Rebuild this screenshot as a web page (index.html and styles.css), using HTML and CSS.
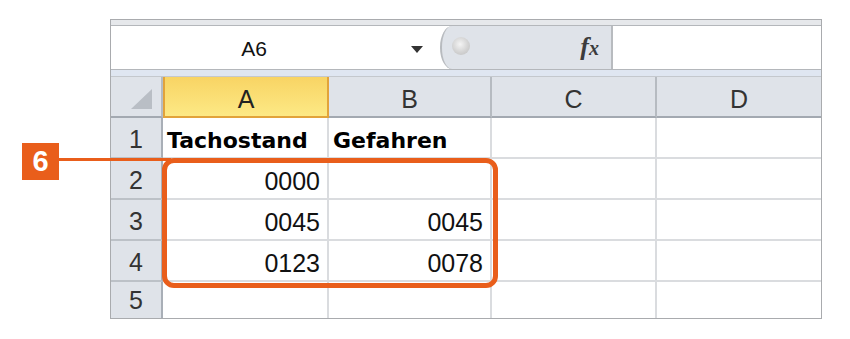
FILE: index.html
```html
<!DOCTYPE html>
<html>
<head>
  <meta charset="UTF-8">
  <link rel="stylesheet" href="styles.css">
</head>
<body>
  <div class="page">

    <!-- Tabellenblatt -->
    <div class="sheet">
      <div class="fbar-strip"></div>
      <div class="fbar">
        <div class="namebox">
          <span class="name">A6</span>
          <span class="drop"></span>
        </div>
        <div class="fx-box">
          <span class="knob"></span>
          <span class="fx">f<span class="fx-x">x</span></span>
        </div>
        <div class="formula"></div>
      </div>
      <div class="fbar-gap"></div>

      <div class="grid">
        <div class="hd corner"><span class="corner-tri"></span></div>
        <div class="hd sel">A</div>
        <div class="hd">B</div>
        <div class="hd">C</div>
        <div class="hd last">D</div>

        <div class="rh">1</div>
        <div class="cell txt">Tachostand</div>
        <div class="cell txt">Gefahren</div>
        <div class="cell"></div>
        <div class="cell last"></div>

        <div class="rh">2</div>
        <div class="cell num">0000</div>
        <div class="cell num"></div>
        <div class="cell"></div>
        <div class="cell last"></div>

        <div class="rh">3</div>
        <div class="cell num">0045</div>
        <div class="cell num">0045</div>
        <div class="cell"></div>
        <div class="cell last"></div>

        <div class="rh">4</div>
        <div class="cell num">0123</div>
        <div class="cell num">0078</div>
        <div class="cell"></div>
        <div class="cell last"></div>

        <div class="rh bottom">5</div>
        <div class="cell bottom"></div>
        <div class="cell bottom"></div>
        <div class="cell bottom"></div>
        <div class="cell bottom last"></div>
      </div>
    </div>

    <!-- Markierung 6 -->
    <div class="badge">6</div>
    <div class="leader"></div>
    <div class="highlight"></div>
  </div>
</body>
</html>
```

FILE: styles.css
```css
body {
  margin: 0;
  background: #fff;
  font-family: "Liberation Sans", Arial, sans-serif;
  color: #222;
}

.page {
  position: relative;
  width: 850px;
  height: 339px;
  padding: 19px 0 0 110px;
  box-sizing: border-box;
}

.sheet {
  width: 712px;
  border: 1px solid #a9abae;
  box-sizing: border-box;
}

/* Bearbeitungsleiste */
.fbar-strip {
  height: 5px;
  background: #e6e8eb;
  border-bottom: 1px solid #b4b7bb;
}

.fbar {
  display: flex;
  height: 43px;
  background: #fff;
}

.namebox {
  width: 329px;
  display: flex;
  align-items: center;
}

.name {
  flex: 1;
  text-align: center;
  font-size: 21px;
  padding-right: 14px;
  padding-top: 2px;
  color: #111;
}

.drop {
  width: 0;
  height: 0;
  border-left: 6px solid transparent;
  border-right: 6px solid transparent;
  border-top: 7px solid #333;
  margin-right: 17px;
  margin-top: 3px;
}

.fx-box {
  position: relative;
  width: 173px;
  background: #dfe3e9;
  border-left: 2px solid #b8bbbf;
  border-right: 2px solid #b8bbbf;
  border-radius: 12px 0 0 12px / 21px 0 0 21px;
  box-sizing: border-box;
  display: flex;
  align-items: center;
  justify-content: flex-end;
}

.knob {
  position: absolute;
  left: 10px;
  top: 11px;
  width: 18px;
  height: 18px;
  border-radius: 50%;
  background: radial-gradient(circle at 45% 40%, #f4f4f4 0%, #d3d3d3 55%, #bdbdbd 100%);
}

.fx {
  font-family: "Liberation Serif", "Times New Roman", serif;
  font-style: italic;
  font-weight: bold;
  font-size: 26px;
  color: #3c3c3c;
  margin-right: 12px;
  margin-top: -2px;
}

.fx-x {
  font-size: 20px;
}

.formula {
  flex: 1;
  background: #fff;
}

.fbar-gap {
  height: 6px;
  background: #dfe6f1;
  border-top: 1px solid #b4b7bb;
  border-bottom: 1px solid #c4c8cd;
}

/* Tabelle */
.grid {
  display: grid;
  grid-template-columns: 52px 166px 163px 165px 1fr;
  grid-template-rows: 41px 41px 41px 41px 41px 36px;
}

.grid > div {
  box-sizing: border-box;
  display: flex;
  align-items: flex-end;
}

.hd {
  background: #dfe3e9;
  border-right: 2px solid #b6bbc1;
  border-bottom: 2px solid #a3a9b1;
  justify-content: center;
  font-size: 25px;
  color: #333;
  padding-bottom: 2px;
}

.hd.sel {
  background: linear-gradient(#f8d464, #fde985);
  border: 2px solid #e2a33a;
  border-top: none;
  color: #222;
}

.corner {
  position: relative;
}

.corner-tri {
  position: absolute;
  right: 9px;
  bottom: 7px;
  width: 0;
  height: 0;
  border-left: 21px solid transparent;
  border-bottom: 20px solid #b9bec5;
}

.rh {
  background: #dfe3e9;
  border-right: 2px solid #a9afb7;
  border-bottom: 2px solid #bcc1c7;
  justify-content: center;
  font-size: 25px;
  color: #333;
  padding-bottom: 3px;
}

.cell {
  border-right: 2px solid #dadcdf;
  border-bottom: 2px solid #dadcdf;
  font-size: 25px;
  color: #111;
  padding-bottom: 2px;
}

.cell.txt {
  font-family: "DejaVu Sans", Verdana, sans-serif;
  font-weight: bold;
  font-size: 22px;
  padding-left: 4px;
  padding-bottom: 4px;
  color: #000;
}

.cell.num {
  justify-content: flex-end;
  padding-right: 7px;
}

.grid .last {
  border-right: none;
}

.grid .bottom {
  border-bottom: none;
}

/* Markierung */
.badge {
  position: absolute;
  left: 22px;
  top: 143px;
  width: 37px;
  height: 37px;
  background: #e95e1b;
  color: #fff;
  font-weight: bold;
  font-size: 29px;
  display: flex;
  align-items: center;
  justify-content: center;
}

.leader {
  position: absolute;
  left: 59px;
  top: 158px;
  width: 112px;
  height: 3px;
  background: #e95e1b;
}

.highlight {
  position: absolute;
  left: 162px;
  top: 158px;
  width: 336px;
  height: 130px;
  border: 5px solid #e95e1b;
  border-radius: 12px;
  box-sizing: border-box;
}
```
